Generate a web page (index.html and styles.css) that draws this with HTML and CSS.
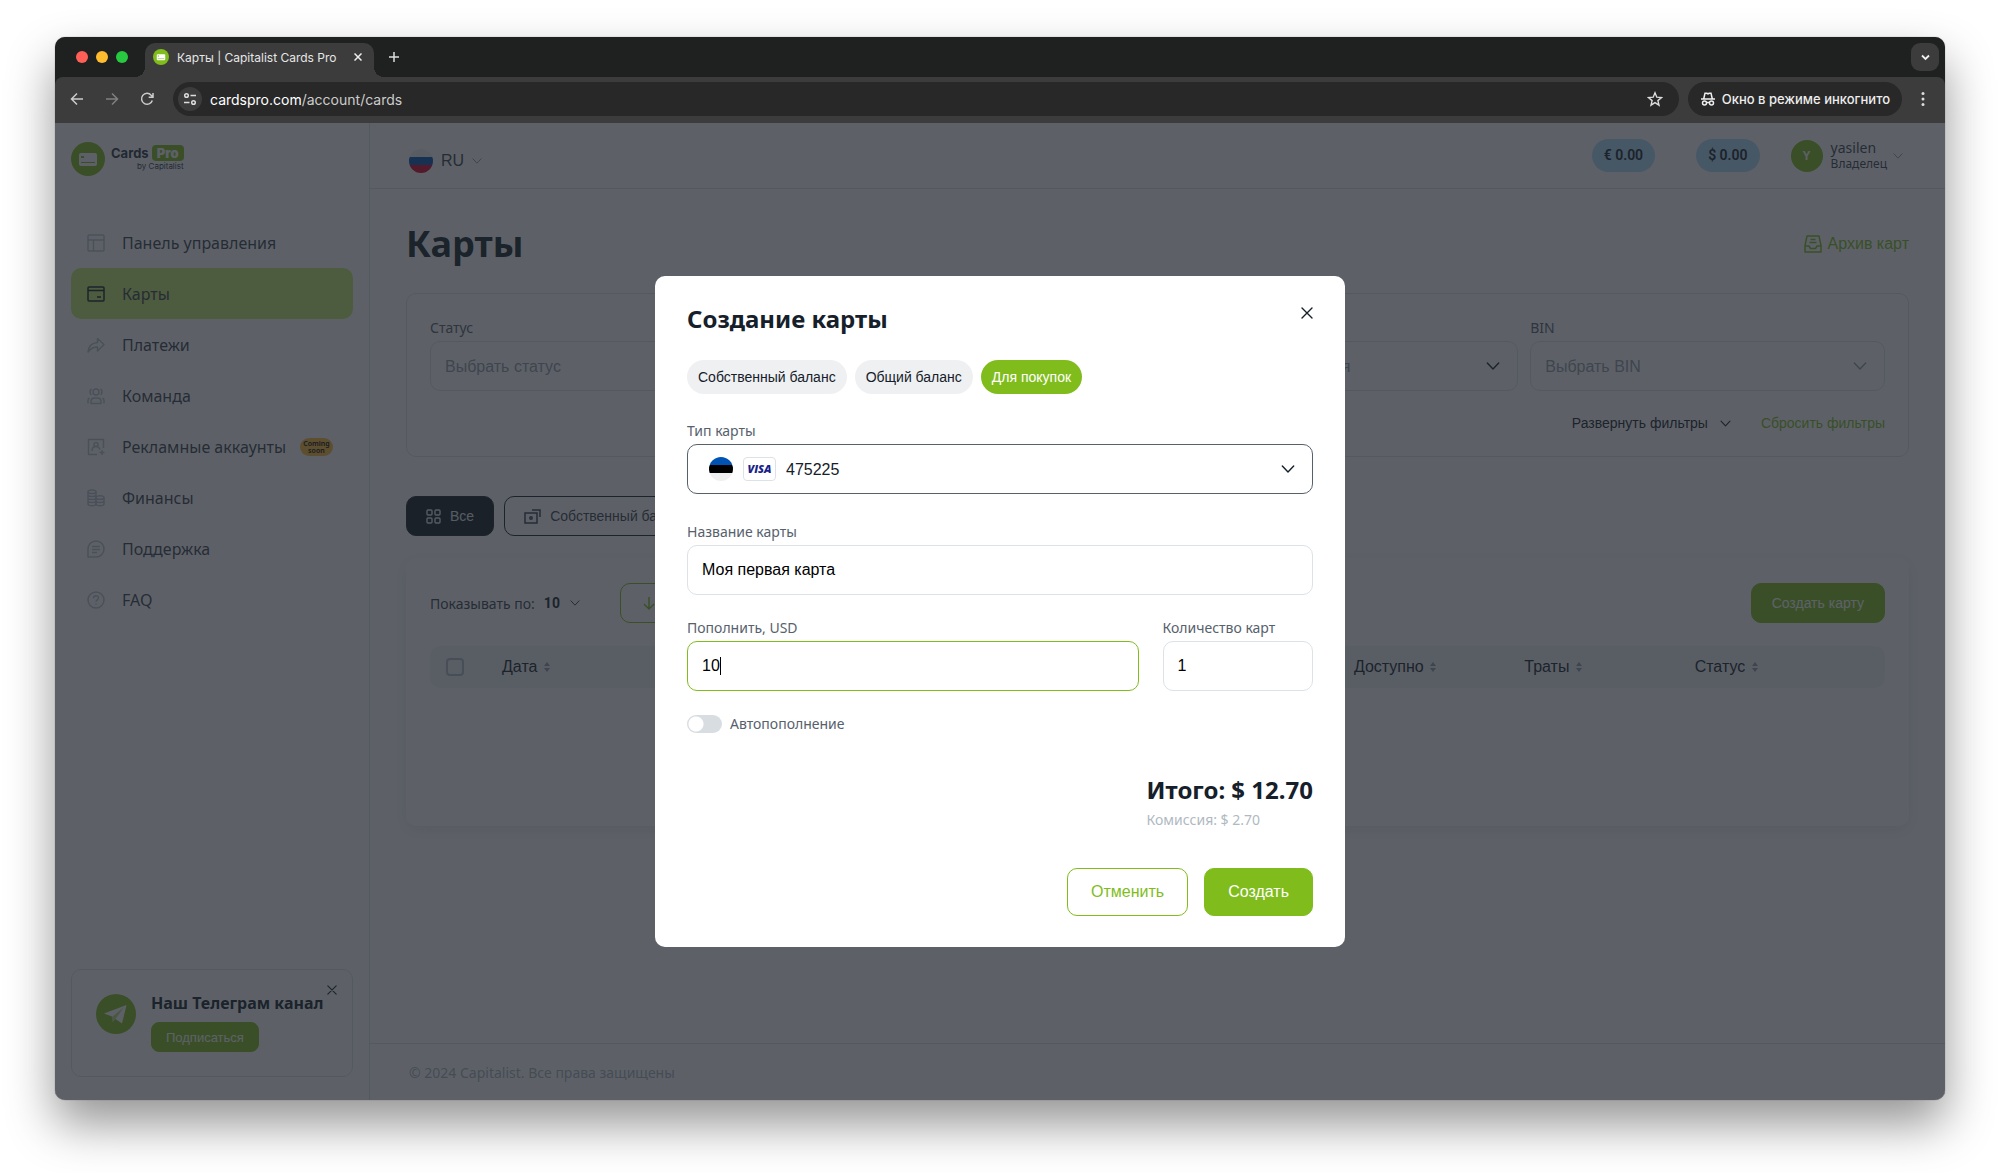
FILE: index.html
```html
<!DOCTYPE html>
<html lang="ru">
  <head>
    <meta charset="UTF-8" />
    <meta name="viewport" content="width=device-width, initial-scale=1.0" />
    <title>Карты | Capitalist Cards Pro</title>
    <link rel="stylesheet" href="styles.css">
  </head>
  <body>
    <!-- shared icons -->
    <svg width="0" height="0" class="sprite" aria-hidden="true">
      <symbol id="chevron" viewBox="0 0 16 16">
        <path d="M1.500 4.500 8 11.500l6.500-7" fill="none" stroke="currentColor" stroke-width="1.600" stroke-linecap="round" stroke-linejoin="round" />
      </symbol>
      <symbol id="cross" viewBox="0 0 12 12">
        <path d="M1 1l10 10M11 1 1 11" fill="none" stroke="currentColor" stroke-width="1.400" stroke-linecap="round" />
      </symbol>
      <symbol id="sort" viewBox="0 0 6 10">
        <path d="M3 0l3 4H0zM3 10l3-4H0z" fill="currentColor" />
      </symbol>
      <symbol id="brand" viewBox="0 0 34 34">
        <circle cx="17" cy="17" r="17" fill="#80bd1c" />
        <rect x="8" y="11" width="18" height="13" rx="2" fill="#fff" />
        <path d="M10 14h3v2h-3zM10 20h14v1H10z" fill="#80bd1c" />
      </symbol>
    </svg>

    <div class="window">
      <div class="tabstrip">
        <div class="lights"><i class="light red"></i><i class="light yellow"></i><i class="light green"></i></div>
        <div class="tab">
          <svg width="16" height="16"><use href="#brand" /></svg>
          <span>Карты | Capitalist Cards Pro</span>
          <svg width="8" height="8" viewBox="0 0 8 8"><path d="M.5.500l7 7M7.500.500l-7 7" stroke="#eee" stroke-width="1.500" /></svg>
        </div>
        <svg class="plus" width="12" height="12" viewBox="0 0 12 12"><path d="M6 1v10M1 6h10" stroke="#ddd" stroke-width="1.500" /></svg>
        <button class="tab-search" aria-label="Поиск вкладок">
          <svg width="9" height="9" viewBox="0 0 9 9"><path d="M1 2.500 4.500 6 8 2.500" fill="none" stroke="#eee" stroke-width="1.800" /></svg>
        </button>
      </div>

      <div class="toolbar">
        <div class="nav-buttons">
          <svg width="14" height="14" viewBox="0 0 14 14"><path d="M13 7H2M7 1.500 1.500 7 7 12.500" fill="none" stroke="#ccc" stroke-width="1.500" /></svg>
          <svg width="14" height="14" viewBox="0 0 14 14"><path d="M1 7h11M7 1.500 12.500 7 7 12.500" fill="none" stroke="#808080" stroke-width="1.500" /></svg>
          <svg width="14" height="14" viewBox="0 0 14 14"><path d="M12.300 8.500A5.500 5.500 0 1 1 11.200 3.200L13 5M13 1v4.300H8.700" fill="none" stroke="#ccc" stroke-width="1.500" /></svg>
        </div>
        <div class="url">
          <span class="site-info">
            <svg width="14" height="14" viewBox="0 0 14 14" fill="none" stroke="#ddd" stroke-width="1.500"><circle cx="3.500" cy="3.500" r="1.800" /><path d="M7.500 3.500H13M1 10.500h5.500" /><circle cx="10.500" cy="10.500" r="1.800" /></svg>
          </span>
          <span class="host">cardspro.com<span>/account/cards</span></span>
          <svg width="16" height="16" viewBox="0 0 16 16"><path d="M8 1.800l1.800 4.400 4.700.4-3.600 3 1.100 4.600L8 11.700l-4 2.500 1.100-4.600-3.600-3 4.700-.4z" fill="none" stroke="#ddd" stroke-width="1.400" /></svg>
        </div>
        <div class="incognito">
          <svg width="16" height="16" viewBox="0 0 16 16" fill="none" stroke="#eee" stroke-width="1.500"><path d="M1 8h14M3.800 7.500 5 2.200h1.700l1.300.6 1.300-.6H11l1.200 5.300" /><circle cx="4.500" cy="12" r="2" /><circle cx="11.500" cy="12" r="2" /><path d="M6.500 11.500h3" /></svg>
          <span>Окно в режиме инкогнито</span>
        </div>
        <svg width="4" height="16" viewBox="0 0 4 16" fill="#ddd"><circle cx="2" cy="2.500" r="1.500" /><circle cx="2" cy="8" r="1.500" /><circle cx="2" cy="13.500" r="1.500" /></svg>
      </div>

      <div class="page">
        <aside class="sidebar">
          <a class="logo" href="#">
            <svg width="34" height="34"><use href="#brand" /></svg>
            <span class="logo-text">
              <span class="logo-name">Cards <b>Pro</b></span>
              <small>by Capitalist</small>
            </span>
          </a>

          <nav class="menu">
            <a href="#"><svg viewBox="0 0 18 18"><rect x="1" y="1" width="16" height="16" rx="1" /><path d="M1 6h16M6.500 6v11" /></svg>Панель управления</a>
            <a href="#" class="active"><svg viewBox="0 0 18 18"><rect x="1" y="2" width="16" height="14" rx="1" /><path d="M1 5.500h16M10 12h4" /></svg>Карты</a>
            <a href="#"><svg viewBox="0 0 18 18"><path d="M10.500 2.500 17 8.500l-6.500 6.500v-4C6 11 3.500 12.500 1 16c.5-6 4-9 9.500-9.500z" /></svg>Платежи</a>
            <a href="#"><svg viewBox="0 0 18 18"><circle cx="9" cy="5" r="3" /><path d="M4 16.500v-2c0-2 1.500-3.500 3.500-3.500h3c2 0 3.500 1.500 3.500 3.500v2zM4.500 2C2.500 3 2.500 6.500 4.500 8M13.500 2c2 1 2 4.500 0 6M1 16.500v-3c0-1 .5-2 1.500-2.500M17 16.500v-3c0-1-.5-2-1.500-2.500" /></svg>Команда</a>
            <a href="#"><svg viewBox="0 0 18 18"><path d="M10 16.500H1.500v-15h15V10M5 13c0-3 1.500-4.500 4-4.500s3.500 1 4 3M15 12v5M12.500 14.500h5" /><circle cx="9" cy="6.500" r="2" /></svg>Рекламные аккаунты <em class="soon">Coming<br>soon</em></a>
            <a href="#"><svg viewBox="0 0 18 18"><ellipse cx="5" cy="2.800" rx="4" ry="1.800" /><path d="M1 3v12c0 2.300 8 2.300 8 0V3M1 6c0 2 8 2 8 0M1 9c0 2 8 2 8 0M1 12c0 2 8 2 8 0" /><ellipse cx="13" cy="8.500" rx="4" ry="1.800" /><path d="M9 9v6c0 2.300 8 2.300 8 0V9M9 12c0 2 8 2 8 0" /></svg>Финансы</a>
            <a href="#"><svg viewBox="0 0 18 18"><path d="M1 17V9a8 8 0 1 1 8 8zM5 6.500h8M5 9.500h8M5 12.500h5" /></svg>Поддержка</a>
            <a href="#"><svg viewBox="0 0 18 18"><circle cx="9" cy="9" r="8" /><path d="M6.500 7.200c0-3.400 5-3.200 5-.4 0 2-2.500 2-2.500 4M9 12.500v1.200" /></svg>FAQ</a>
          </nav>

          <div class="telegram">
            <svg width="40" height="40" viewBox="0 0 40 40"><circle cx="20" cy="20" r="20" fill="#80bd1c" /><path d="M8 19.500 30.500 11 26 29.500l-6.500-4.500-3 3-.5-5.500z" fill="#fff" /><path d="M16 23 28 13 19.500 25l-3 3z" fill="#80bd1c" opacity=".55" /></svg>
            <div>
              <strong>Наш Телеграм канал</strong>
              <button class="btn btn--small">Подписаться</button>
            </div>
            <button class="telegram-close" aria-label="Закрыть"><svg width="10" height="10"><use href="#cross" /></svg></button>
          </div>
        </aside>

        <div class="main">
          <header class="header">
            <button class="lang">
              <svg width="24" height="24" viewBox="0 0 24 24"><clipPath id="round"><circle cx="12" cy="12" r="12" /></clipPath><g clip-path="url(#round)"><path d="M0 0h24v8H0z" fill="#f0f0f0" /><path d="M0 8h24v8H0z" fill="#0052b4" /><path d="M0 16h24v8H0z" fill="#d80027" /></g></svg>
              <span>RU</span>
              <svg width="10" height="10"><use href="#chevron" /></svg>
            </button>
            <div class="account">
              <span class="balance">€ 0.00</span>
              <span class="balance">$ 0.00</span>
              <button class="user">
                <span class="avatar">Y</span>
                <span class="user-name">yasilen<small>Владелец</small></span>
                <svg width="10" height="10"><use href="#chevron" /></svg>
              </button>
            </div>
          </header>

          <main class="content">
            <div class="title-row">
              <h1>Карты</h1>
              <a href="#" class="archive">
                <svg width="18" height="18" viewBox="0 0 18 18"><path d="M3 1h12l2 9.500V17H1v-6.500zM1 11h4l1.500 2.500h5L13 11h4M6.500 4.500h5M5.500 7.500h7" fill="none" stroke="currentColor" stroke-width="1.500" stroke-linejoin="round" /></svg>
                Архив карт
              </a>
            </div>

            <section class="filters">
              <div class="filter-grid">
                <div class="field">
                  <label for="status">Статус</label>
                  <div class="box"><select id="status"><option>Выбрать статус</option></select><svg width="14" height="14"><use href="#chevron" /></svg></div>
                </div>
                <div class="field">
                  <div class="box"><select aria-label="Команда"></select><svg width="14" height="14"><use href="#chevron" /></svg></div>
                </div>
                <div class="field">
                  <div class="box box--set"><select aria-label="Состояние"><option>Активная и неактивная</option></select><svg width="14" height="14"><use href="#chevron" /></svg></div>
                </div>
                <div class="field">
                  <label for="bin">BIN</label>
                  <div class="box"><select id="bin"><option>Выбрать BIN</option></select><svg width="14" height="14"><use href="#chevron" /></svg></div>
                </div>
              </div>
              <div class="filter-actions">
                <button class="link">Развернуть фильтры <svg width="11" height="11"><use href="#chevron" /></svg></button>
                <button class="link link--green">Сбросить фильтры</button>
              </div>
            </section>

            <div class="kinds">
              <button class="kind kind--active"><svg width="15" height="15" viewBox="0 0 15 15" fill="none" stroke="currentColor" stroke-width="1.400"><rect x="1" y="1" width="5" height="5" rx="1" /><rect x="9" y="1" width="5" height="5" rx="1" /><rect x="1" y="9" width="5" height="5" rx="1" /><rect x="9" y="9" width="5" height="5" rx="1" /></svg>Все</button>
              <button class="kind"><svg width="17" height="15" viewBox="0 0 17 15" fill="none" stroke="currentColor" stroke-width="1.500"><path d="M1 4h12v10H1zM8 1h8v7" /><circle cx="7" cy="9" r="1.200" /></svg>Собственный баланс</button>
            </div>

            <section class="cards">
              <div class="cards-top">
                <div class="per-page">
                  <label for="per-page">Показывать по:</label>
                  <select id="per-page"><option>10</option></select>
                  <svg width="10" height="10"><use href="#chevron" /></svg>
                </div>
                <button class="export" aria-label="Экспорт"><svg width="12" height="14" viewBox="0 0 12 14"><path d="M6 1v12M1 8l5 5 5-5" fill="none" stroke="currentColor" stroke-width="1.400" /></svg></button>
                <button class="btn btn--create">Создать карту</button>
              </div>
              <table>
                <thead>
                  <tr>
                    <th class="col-check"><input type="checkbox" aria-label="Выбрать все" /></th>
                    <th>Дата <svg width="6" height="10"><use href="#sort" /></svg></th>
                    <th></th>
                    <th></th>
                    <th></th>
                    <th></th>
                    <th>Доступно <svg width="6" height="10"><use href="#sort" /></svg></th>
                    <th>Траты <svg width="6" height="10"><use href="#sort" /></svg></th>
                    <th>Статус <svg width="6" height="10"><use href="#sort" /></svg></th>
                    <th class="col-end"></th>
                  </tr>
                </thead>
              </table>
            </section>
          </main>

          <footer class="footer">© 2024 Capitalist. Все права защищены</footer>
        </div>

        <div class="overlay">
          <form class="modal" role="dialog" aria-labelledby="modal-title">
            <div class="modal-head">
              <h2 id="modal-title">Создание карты</h2>
              <button type="button" class="modal-close" aria-label="Закрыть"><svg width="12" height="12"><use href="#cross" /></svg></button>
            </div>
            <div class="chips">
              <button type="button" class="chip">Собственный баланс</button>
              <button type="button" class="chip">Общий баланс</button>
              <button type="button" class="chip chip--active">Для покупок</button>
            </div>
            <div class="field">
              <label for="type">Тип карты</label>
              <div class="box box--type">
                <svg width="24" height="24" viewBox="0 0 24 24"><g clip-path="url(#round)"><path d="M0 0h24v8H0z" fill="#0052b4" /><path d="M0 8h24v8H0z" fill="#000" /><path d="M0 16h24v8H0z" fill="#f0f0f0" /></g></svg>
                <span class="visa">VISA</span>
                <select id="type"><option>475225</option></select>
                <svg width="14" height="14"><use href="#chevron" /></svg>
              </div>
            </div>
            <div class="field">
              <label for="name">Название карты</label>
              <input class="box" id="name" type="text" value="Моя первая карта" />
            </div>
            <div class="field-row">
              <div class="field">
                <label for="amount">Пополнить, USD</label>
                <div class="caret"><input class="box box--focus" id="amount" type="text" value="10" /></div>
              </div>
              <div class="field">
                <label for="count">Количество карт</label>
                <input class="box" id="count" type="text" value="1" />
              </div>
            </div>
            <label class="toggle"><input type="checkbox" />Автопополнение</label>
            <div class="total">
              <strong>Итого: $ 12.70</strong>
              <span>Комиссия: $ 2.70</span>
            </div>
            <div class="modal-actions">
              <button type="button" class="btn btn--outline">Отменить</button>
              <button type="button" class="btn">Создать</button>
            </div>
          </form>
        </div>
      </div>
    </div>
  </body>
</html>
```

FILE: styles.css
```css
* {
  box-sizing: border-box;
}

:root {
  --green: #80bd1c;
  --dark: #15202a;
  --text: #3a434d;
  --muted: #8f9ba6;
  --line: #dde2e6;
  --sans: "Noto Sans", sans-serif;
  --ui: "Liberation Sans", Arial, sans-serif;
  --system: Inter, sans-serif;
}

body {
  display: flex;
  min-height: 100vh;
  margin: 0;
  padding: 37px 55px 73px;
  background: #fff;
  font-family: var(--sans);
  font-size: 14px;
  color: var(--text);
}

h1,
h2 {
  margin: 0;
  color: var(--dark);
}

a {
  color: inherit;
  text-decoration: none;
}

button {
  padding: 0;
  border: none;
  background: none;
  font-family: var(--ui);
  font-size: 14px;
  color: inherit;
}

svg {
  flex: none;
}

.sprite {
  position: absolute;
}

/* browser window */

.window {
  display: flex;
  flex-direction: column;
  flex: 1;
  min-width: 0;
  overflow: hidden;
  border-radius: 10px;
  background: #1f2120;
  box-shadow: 0 0 1px rgba(0, 0, 0, 0.6), 0 24px 48px rgba(0, 0, 0, 0.42);
  font-family: var(--system);
}

.tabstrip {
  display: flex;
  align-items: flex-end;
  height: 40px;
  padding: 0 6px 0 21px;
}

.lights {
  display: flex;
  gap: 8px;
  width: 69px;
  padding-bottom: 14px;
}

.light {
  width: 12px;
  height: 12px;
  border-radius: 50%;
}

.light.red {
  background: #ff5f57;
}

.light.yellow {
  background: #febc2e;
}

.light.green {
  background: #28c840;
}

.tab {
  position: relative;
  display: flex;
  align-items: center;
  gap: 8px;
  width: 229px;
  height: 34px;
  padding: 0 12px 6px 8px;
  border-radius: 10px 10px 0 0;
  background: #3c3c3c;
  font-size: 12px;
  color: #e6e6e6;
}

.tab span {
  flex: 1;
  white-space: nowrap;
}

.tab::before,
.tab::after {
  content: "";
  position: absolute;
  bottom: 0;
  width: 10px;
  height: 10px;
}

.tab::before {
  right: 100%;
  background: radial-gradient(circle at 0 0, transparent 10px, #3c3c3c 10px);
}

.tab::after {
  left: 100%;
  background: radial-gradient(circle at 100% 0, transparent 10px, #3c3c3c 10px);
}

.plus {
  margin: 0 auto 14px 14px;
}

.tab-search {
  width: 28px;
  height: 28px;
  margin-bottom: 6px;
  border-radius: 9px;
  background: #3c3c3c;
}

.toolbar {
  display: flex;
  align-items: center;
  height: 46px;
  padding: 0 20px 2px 15px;
  border-radius: 8px 8px 0 0;
  background: #3c3c3c;
  color: #eee;
}

.nav-buttons {
  display: flex;
  gap: 21px;
  margin-right: 19px;
}

.url,
.incognito {
  display: flex;
  align-items: center;
  height: 34px;
  border-radius: 17px;
  background: #282828;
}

.url {
  flex: 1;
  padding: 0 16px 0 5px;
  font-size: 14px;
}

.site-info {
  display: grid;
  place-items: center;
  width: 24px;
  height: 24px;
  margin-right: 8px;
  border-radius: 50%;
  background: #3c3c3c;
}

.host {
  flex: 1;
  color: #fff;
}

.host span {
  color: #ccc;
}

.incognito {
  gap: 6px;
  margin: 0 19px 0 9px;
  padding: 0 12px;
  font-size: 13px;
  font-weight: 500;
}

/* page */

.page {
  position: relative;
  display: flex;
  flex: 1;
  background: #fff;
  font-family: var(--sans);
}

.sidebar {
  display: flex;
  flex-direction: column;
  width: 315px;
  padding: 19px 16px 23px;
  border-right: 1px solid var(--line);
}

.logo {
  display: flex;
  gap: 6px;
  font-family: var(--system);
  color: #2c3542;
}

.logo-text {
  display: flex;
  flex-direction: column;
  align-items: flex-end;
  padding-top: 3px;
}

.logo-name {
  font-size: 13px;
  line-height: 16px;
  font-weight: 700;
}

.logo-name b {
  display: inline-block;
  padding: 0 5px;
  border-radius: 4px;
  background: var(--green);
  color: #fff;
}

.logo small {
  font-size: 8px;
  line-height: 10px;
}

.menu {
  display: flex;
  flex-direction: column;
  margin-top: 41px;
}

.menu a {
  display: flex;
  align-items: center;
  height: 51px;
  padding: 0 16px;
  border-radius: 10px;
  font-size: 16px;
}

.menu svg {
  width: 18px;
  height: 18px;
  margin-right: 17px;
  fill: none;
  stroke: #bcc3ca;
  stroke-width: 1.5;
  stroke-linejoin: round;
}

.menu .active {
  background: #c6e86d;
}

.menu .active svg {
  stroke: var(--dark);
}

.soon {
  margin-left: 14px;
  padding: 2px 3px;
  border-radius: 9px;
  background: #fbb937;
  font-size: 7px;
  line-height: 7px;
  font-style: normal;
  font-weight: 600;
  text-align: center;
  color: #000;
}

.telegram {
  position: relative;
  display: flex;
  gap: 15px;
  margin-top: auto;
  padding: 24px;
  border: 1px solid var(--line);
  border-radius: 10px;
}

.telegram strong {
  display: block;
  margin: -2px 0 8px;
  font-size: 16px;
  line-height: 22px;
  font-weight: 700;
  color: var(--dark);
  white-space: nowrap;
}

.telegram-close {
  position: absolute;
  top: 15px;
  right: 15px;
  display: flex;
  color: var(--dark);
}

.btn {
  height: 48px;
  padding: 0 23px;
  border: 1px solid var(--green);
  border-radius: 10px;
  background: var(--green);
  font-size: 16px;
  color: #fff;
}

.btn--outline {
  background: #fff;
  color: var(--green);
}

.btn--small {
  height: 30px;
  padding: 0 14px;
  border-radius: 8px;
  font-size: 13px;
}

.btn--create {
  height: 40px;
  margin-left: auto;
  padding: 0 20px;
  font-size: 14px;
}

.main {
  display: flex;
  flex-direction: column;
  flex: 1;
  min-width: 0;
}

.header {
  display: flex;
  align-items: center;
  justify-content: space-between;
  height: 66px;
  padding: 0 42px 0 39px;
  border-bottom: 1px solid var(--line);
}

.lang {
  display: flex;
  align-items: center;
  gap: 8px;
  padding-top: 10px;
  font-size: 16px;
}

.lang svg:last-child,
.user svg {
  color: var(--muted);
}

.account,
.user {
  display: flex;
  align-items: center;
}

.balance {
  margin-right: 41px;
  padding: 0 12px;
  border-radius: 17px;
  background: #addaf6;
  font-family: Roboto, sans-serif;
  font-size: 14px;
  line-height: 33px;
  font-weight: 600;
  color: var(--dark);
}

.balance + .balance {
  margin-right: 31px;
}

.avatar {
  width: 32px;
  margin-right: 8px;
  border-radius: 50%;
  background: var(--green);
  font-size: 12px;
  line-height: 32px;
  font-weight: 700;
  color: #fff;
}

.user-name {
  margin-right: 6px;
  font-family: var(--sans);
  font-size: 14px;
  line-height: 16px;
  text-align: left;
}

.user-name small {
  display: block;
  font-size: 12px;
}

.content {
  padding: 28px 36px 0;
}

.title-row {
  display: flex;
  align-items: center;
  justify-content: space-between;
}

h1 {
  font-size: 36px;
  line-height: 54px;
}

.archive {
  display: flex;
  align-items: center;
  gap: 6px;
  font-family: var(--ui);
  font-size: 16px;
  color: var(--green);
}

.filters {
  margin-top: 22px;
  padding: 24px 23px;
  border: 1px solid var(--line);
  border-radius: 10px;
}

.filter-grid {
  display: grid;
  grid-template-columns: repeat(4, 1fr);
  align-items: end;
  gap: 12px;
}

.field label {
  display: block;
  margin-bottom: 4px;
  line-height: 19px;
  color: #56616c;
}

.box {
  display: flex;
  align-items: center;
  width: 100%;
  height: 50px;
  padding: 0 17px 0 14px;
  border: 1px solid var(--line);
  border-radius: 10px;
  background: #fff;
  font-family: var(--ui);
  font-size: 16px;
  color: var(--muted);
}

select {
  flex: 1;
  min-width: 0;
  padding: 0;
  border: none;
  outline: none;
  appearance: none;
  background: none;
  font: inherit;
  color: inherit;
}

.box--set svg {
  color: var(--dark);
}

.filter-actions {
  display: flex;
  justify-content: flex-end;
  gap: 30px;
  margin-top: 23px;
}

.link {
  display: flex;
  align-items: center;
  gap: 12px;
  line-height: 18px;
  color: var(--dark);
}

.link--green {
  color: var(--green);
}

.kinds {
  display: flex;
  gap: 10px;
  margin-top: 39px;
}

.kind {
  display: flex;
  align-items: center;
  gap: 9px;
  height: 40px;
  padding: 0 19px;
  border: 1px solid var(--dark);
  border-radius: 10px;
}

.kind--active {
  background: #101c22;
  color: #e6eaee;
}

.cards {
  min-height: 268px;
  margin-top: 22px;
  padding: 25px 24px;
  border-radius: 10px;
  box-shadow: 0 4px 16px rgba(20, 32, 42, 0.1);
}

.cards-top {
  display: flex;
  align-items: center;
}

.per-page {
  display: flex;
  align-items: center;
  width: 190px;
}

.per-page select {
  flex: none;
  margin: 0 9px;
  font-family: Roboto, sans-serif;
  font-weight: 700;
  color: var(--dark);
}

.export {
  display: flex;
  align-items: center;
  height: 40px;
  padding: 0 22px;
  border: 1px solid var(--green);
  border-radius: 10px;
  color: var(--green);
}

table {
  width: 100%;
  margin-top: 23px;
  border-spacing: 0;
  table-layout: fixed;
}

th {
  height: 42px;
  padding: 0 0 0 16px;
  background: #f1f3f5;
  font-family: var(--ui);
  font-size: 16px;
  font-weight: 400;
  text-align: left;
  color: var(--dark);
}

th svg {
  margin-left: 2px;
  color: var(--muted);
}

.col-check {
  width: 56px;
  border-radius: 10px 0 0 10px;
}

.col-end {
  width: 36px;
  border-radius: 0 10px 10px 0;
}

.col-check input {
  display: block;
  width: 18px;
  height: 18px;
  margin: 0;
  border: 2px solid #b4bcc4;
  border-radius: 4px;
  appearance: none;
}

.footer {
  margin-top: auto;
  padding: 19px 39px 18px;
  border-top: 1px solid var(--line);
  line-height: 19px;
  color: #aab2ba;
}

/* create card dialog */

.overlay {
  position: absolute;
  inset: 0;
  display: grid;
  place-items: center;
  background: rgba(30, 36, 45, 0.72);
}

.modal {
  display: flex;
  flex-direction: column;
  width: 690px;
  padding: 31px 32px;
  border-radius: 10px;
  background: #fff;
}

.modal-head {
  display: flex;
  align-items: flex-start;
  justify-content: space-between;
  margin-bottom: 29px;
}

h2 {
  font-size: 24px;
  line-height: 24px;
}

.modal-close {
  display: flex;
  color: var(--dark);
}

.chips {
  display: flex;
  gap: 8px;
  margin-bottom: 27px;
}

.chip {
  height: 34px;
  padding: 0 11px;
  border-radius: 17px;
  background: #eff0f2;
  color: var(--dark);
}

.chip--active {
  background: var(--green);
  color: #fff;
}

.modal .field {
  margin-bottom: 28px;
}

.modal .field label {
  margin-bottom: 4px;
}

.modal .box {
  color: #000;
}

.modal .box--type {
  gap: 10px;
  padding-left: 21px;
  border-color: #56616c;
  color: var(--dark);
}

.modal .box--focus {
  border-color: var(--green);
}

.modal .field:has(#name) {
  margin-bottom: 23px;
}

.visa {
  width: 33px;
  border: 1px solid var(--line);
  border-radius: 4px;
  font-family: "Open Sans", sans-serif;
  font-size: 11px;
  line-height: 22px;
  font-style: italic;
  font-weight: 800;
  text-align: center;
  color: #1a1f8c;
}

.field-row {
  display: grid;
  grid-template-columns: 3fr 1fr;
  gap: 24px;
}

.modal .field-row .field {
  margin-bottom: 23px;
}

.caret {
  position: relative;
}

.caret::after {
  content: "";
  position: absolute;
  top: 16px;
  left: 33px;
  width: 1px;
  height: 18px;
  background: #000;
}

.toggle {
  display: flex;
  align-items: center;
  gap: 8px;
  line-height: 19px;
  color: #56616c;
}

.toggle input {
  width: 35px;
  height: 18px;
  margin: 0;
  border-radius: 9px;
  appearance: none;
  background: radial-gradient(circle at 9px 9px, #fff 7px, #d8dde1 8px);
}

.total {
  align-self: flex-end;
  margin-top: 41px;
}

.total strong {
  display: block;
  font-size: 24px;
  line-height: 32px;
  color: var(--dark);
}

.total span {
  line-height: 28px;
  color: #b0b9c1;
}

.modal-actions {
  display: flex;
  justify-content: flex-end;
  gap: 16px;
  margin-top: 34px;
}
```
